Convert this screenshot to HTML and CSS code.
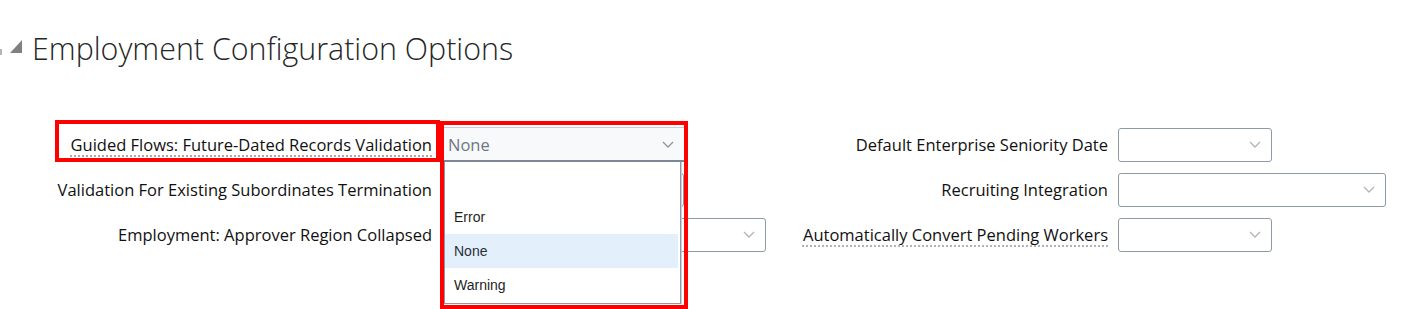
FILE: index.html
```html
<!DOCTYPE html>
<html lang="en">
<head>
<meta charset="utf-8">
<title>Employment Configuration Options</title>
<link rel="stylesheet" href="styles.css">
</head>
<body>
<div class="page">
  <div class="header">
    <span class="edge"></span>
    <span class="tri"></span>
    <h1 class="title">Employment Configuration Options</h1>
  </div>
  <div class="form">
    <div class="col col-left">
      <div class="lbl"><span class="txt dotted hl">Guided Flows: Future-Dated Records Validation</span></div>
      <div class="field">
        <div class="select focused w240">
          <span class="val">None</span>
          <svg class="chev" width="12" height="7" viewBox="0 0 12 7"><polyline points="1,1 6,6 11,1" fill="none" stroke="currentColor" stroke-width="1.3"/></svg>
        </div>
        <ul class="menu">
          <li class="item">&nbsp;</li>
          <li class="item">Error</li>
          <li class="item active">None</li>
          <li class="item">Warning</li>
        </ul>
        <div class="annot"></div>
      </div>

      <div class="lbl"><span class="txt">Validation For Existing Subordinates Termination</span></div>
      <div class="field">
        <div class="select w240">
          <span class="val"></span>
          <svg class="chev" width="12" height="7" viewBox="0 0 12 7"><polyline points="1,1 6,6 11,1" fill="none" stroke="currentColor" stroke-width="1.3"/></svg>
        </div>
      </div>

      <div class="lbl"><span class="txt">Employment: Approver Region Collapsed</span></div>
      <div class="field">
        <div class="select w322">
          <span class="val"></span>
          <svg class="chev" width="12" height="7" viewBox="0 0 12 7"><polyline points="1,1 6,6 11,1" fill="none" stroke="currentColor" stroke-width="1.3"/></svg>
        </div>
      </div>
    </div>

    <div class="col col-right">
      <div class="lbl"><span class="txt">Default Enterprise Seniority Date</span></div>
      <div class="field">
        <div class="select w154">
          <span class="val"></span>
          <svg class="chev" width="12" height="7" viewBox="0 0 12 7"><polyline points="1,1 6,6 11,1" fill="none" stroke="currentColor" stroke-width="1.3"/></svg>
        </div>
      </div>

      <div class="lbl"><span class="txt">Recruiting Integration</span></div>
      <div class="field">
        <div class="select w268">
          <span class="val"></span>
          <svg class="chev" width="12" height="7" viewBox="0 0 12 7"><polyline points="1,1 6,6 11,1" fill="none" stroke="currentColor" stroke-width="1.3"/></svg>
        </div>
      </div>

      <div class="lbl"><span class="txt dotted">Automatically Convert Pending Workers</span></div>
      <div class="field">
        <div class="select w154">
          <span class="val"></span>
          <svg class="chev" width="12" height="7" viewBox="0 0 12 7"><polyline points="1,1 6,6 11,1" fill="none" stroke="currentColor" stroke-width="1.3"/></svg>
        </div>
      </div>
    </div>
  </div>
</div>
</body>
</html>
```

FILE: styles.css
```css
* { box-sizing: border-box; }
html, body { margin: 0; padding: 0; background: #ffffff; }
body {
  font-family: "Open Sans", "Noto Sans", sans-serif;
  color: #111111;
  width: 1419px;
  height: 309px;
  overflow: hidden;
}
.page { position: relative; }

.header {
  display: flex;
  align-items: flex-start;
  padding-top: 29px;
  height: 69px;
}
.edge {
  width: 2px;
  height: 6px;
  margin-top: 20px;
  margin-right: 8px;
  background: #b5b5b5;
}
.tri {
  width: 12px;
  height: 13px;
  margin-top: 11px;
  margin-right: 10px;
  background: #808080;
  clip-path: polygon(100% 0, 100% 100%, 0 100%);
}
.title {
  margin: 0;
  font-weight: 300;
  font-size: 30.4px;
  line-height: 40px;
  color: #262626;
}

.form {
  display: flex;
  padding-top: 58px;
}
.col {
  display: grid;
  grid-auto-rows: 35px;
  row-gap: 10px;
  align-items: center;
}
.col-left {
  grid-template-columns: 432px 340px;
  column-gap: 12px;
}
.col-right {
  grid-template-columns: 324px 300px;
  column-gap: 10px;
}
.lbl {
  justify-self: end;
  font-size: 16.5px;
  line-height: 20px;
  color: #111111;
  white-space: nowrap;
}
.txt { position: relative; display: inline-block; }
.dotted {
  text-decoration-line: underline;
  text-decoration-style: dotted;
  text-decoration-color: #9a9a9a;
  text-underline-offset: 5px;
}
.hl::after {
  content: "";
  position: absolute;
  left: -16px;
  right: -8px;
  top: -15px;
  bottom: -7px;
  border: 4px solid #ff0000;
}

.field {
  position: relative;
  height: 35px;
  display: flex;
  align-items: center;
}
.select {
  height: 34px;
  display: flex;
  align-items: center;
  justify-content: space-between;
  padding: 0 10px 0 4px;
  border: 1px solid #8e9aa5;
  border-radius: 3px;
  background: #ffffff;
  color: #b4b4b4;
}
.select.focused {
  height: 35px;
  border: none;
  border-top: 1px solid #c9ced3;
  border-bottom: 2px solid #7b8893;
  border-radius: 0;
  background: #f8f9fb;
  color: #959595;
}
.val {
  font-size: 16.5px;
  color: #6f7780;
}
.chev { display: block; }
.w240 { width: 240px; }
.w322 { width: 322px; }
.w154 { width: 154px; }
.w268 { width: 268px; }

.menu {
  position: absolute;
  z-index: 2;
  left: 0;
  top: 35px;
  width: 237px;
  margin: 0;
  padding: 4px 2px 1px 0;
  list-style: none;
  background: #ffffff;
  border: 1px solid #8c99a5;
  border-top: none;
  box-shadow: 1px 0 0 #c9d0d6;
  font-family: "Liberation Sans", Arial, sans-serif;
  font-size: 14px;
  color: #1f1f1f;
}
.item {
  height: 34px;
  line-height: 34px;
  padding-left: 9px;
}
.item.active {
  background: #e3effb;
  color: #2a2f36;
}
.annot {
  position: absolute;
  z-index: 3;
  left: -4px;
  top: -6px;
  width: 248px;
  height: 188px;
  border: 4px solid #ff0000;
  pointer-events: none;
}
```
